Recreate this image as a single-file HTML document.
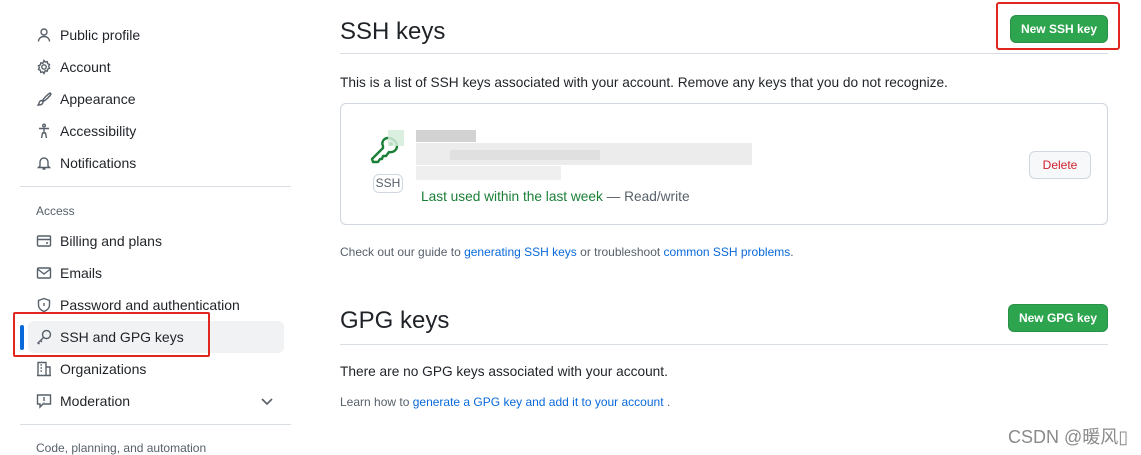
<!DOCTYPE html>
<html><head><meta charset="utf-8"><style>
*{margin:0;padding:0;box-sizing:border-box}
body{width:1141px;height:452px;overflow:hidden;background:#fff;font-family:"Liberation Sans","Noto Sans CJK SC",sans-serif;color:#1f2328;position:relative}
.a{position:absolute;white-space:nowrap}
.it{position:absolute;left:36px;font-size:14px;line-height:20px;display:flex;align-items:center}
.it svg{width:16px;height:16px;margin-right:8px;fill:none;stroke:#57606a;stroke-width:1.4}
.hr{position:absolute;height:1px;background:#d8dee4}
.btn{position:absolute;background:#2da44e;color:#fff;font-weight:bold;font-size:12px;border-radius:6px;border:1px solid rgba(27,31,36,.15);display:flex;align-items:center;justify-content:center}
a{color:#0969da;text-decoration:none}
.blur{position:absolute;background:#e8e8e8}
</style></head><body>
<div class="it" style="top:25px"><svg viewBox="0 0 16 16"><circle cx="8" cy="5" r="3"/><path d="M2.5 14.5c0-3 2.5-5 5.5-5s5.5 2 5.5 5"/></svg>Public profile</div>
<div class="it" style="top:57px"><svg viewBox="0 0 16 16"><circle cx="8" cy="8" r="2.2"/><path d="M8 1.5l1.2 1.6 2-.5.4 2 1.9.9-.8 1.9.8 1.9-1.9.9-.4 2-2-.5L8 14.5l-1.2-1.6-2 .5-.4-2-1.9-.9.8-1.9-.8-1.9 1.9-.9.4-2 2 .5z"/></svg>Account</div>
<div class="it" style="top:89px"><svg viewBox="0 0 16 16"><path d="M14 2c-2 1-6 5-7 7l1 1c2-1 6-5 7-7zM6 9.5c-2 0-3 1.5-3 3l-1 1.5c2 0 5-.5 5-3z"/></svg>Appearance</div>
<div class="it" style="top:121px"><svg viewBox="0 0 16 16"><circle cx="8" cy="2.5" r="1.3"/><path d="M3 5.5h10M8 5v5M5.5 15l1-5h3l1 5"/></svg>Accessibility</div>
<div class="it" style="top:153px"><svg viewBox="0 0 16 16"><path d="M4 11V7a4 4 0 018 0v4l1.5 1.5h-11zM6.5 14h3"/></svg>Notifications</div>
<div class="hr" style="left:20px;top:186px;width:271px"></div>
<div class="a" style="left:36px;top:204px;font-size:12px;color:#57606a">Access</div>
<div class="it" style="top:231px"><svg viewBox="0 0 16 16"><rect x="1.5" y="3" width="13" height="10" rx="1"/><path d="M1.5 6.5h13M10 10h2"/></svg>Billing and plans</div>
<div class="it" style="top:263px"><svg viewBox="0 0 16 16"><rect x="1.5" y="3" width="13" height="10" rx="1"/><path d="M1.5 4l6.5 5 6.5-5"/></svg>Emails</div>
<div class="it" style="top:295px"><svg viewBox="0 0 16 16"><path d="M8 1.5l5.5 2v4.5c0 3.5-3 5.5-5.5 6.5-2.5-1-5.5-3-5.5-6.5V3.5z"/><path d="M8 6v3"/></svg>Password and authentication</div>
<div class="a" style="left:28px;top:321px;width:256px;height:32px;background:#f0f2f4;border-radius:6px"></div>
<div class="a" style="left:20px;top:325px;width:4px;height:25px;background:#0969da;border-radius:3px"></div>
<div class="it" style="top:327px;font-weight:500"><svg viewBox="0 0 16 16"><circle cx="10.5" cy="5.5" r="4"/><path d="M7.5 8.5L2 14l1.5 1M4.5 11.5l1.5 1.5"/></svg>SSH and GPG keys</div>
<div class="it" style="top:359px"><svg viewBox="0 0 16 16"><path d="M2 14.5V1.5h8v13M10 6h4v8.5M1 14.5h14M4.5 4h1.5M4.5 7h1.5M4.5 10h1.5"/></svg>Organizations</div>
<div class="it" style="top:391px"><svg viewBox="0 0 16 16"><path d="M1.5 2h13v9H7l-3 3v-3H1.5z"/><path d="M8 4v4M8 9.5v.5"/></svg>Moderation</div>
<svg class="a" style="left:261px;top:397px" width="12" height="10" viewBox="0 0 12 10"><path d="M1 2l5 5 5-5" fill="none" stroke="#57606a" stroke-width="1.6"/></svg>
<div class="hr" style="left:20px;top:424px;width:271px"></div>
<div class="a" style="left:36px;top:441px;font-size:12px;color:#57606a">Code, planning, and automation</div>
<div class="a" style="left:13px;top:312px;width:197px;height:45px;border:2px solid #e0261f;border-radius:2px"></div>

<div class="a" style="left:340px;top:18px;font-size:24px;">SSH keys</div>
<div class="hr" style="left:340px;top:53px;width:768px"></div>
<div class="btn" style="left:1010px;top:15px;width:98px;height:28px">New SSH key</div>
<div class="a" style="left:996px;top:2px;width:124px;height:48px;border:2px solid #e0261f;border-radius:3px"></div>
<div class="a" style="left:340px;top:75px;font-size:13.7px">This is a list of SSH keys associated with your account. Remove any keys that you do not recognize.</div>
<div class="a" style="left:340px;top:103px;width:768px;height:122px;border:1px solid #d0d7de;border-radius:6px"></div>
<svg class="a" style="left:370px;top:136px" width="40" height="34" viewBox="0 0 40 34"><path d="M13 10c-2-4 1-8 5-8 5 0 9 4 9 8 0 4-4 7-8 6l-3 4-3 0-1 3-2 0-2 3H3l-1-3 11-11z" fill="none" stroke="#1a7f37" stroke-width="2.4" stroke-linejoin="round"/><circle cx="21" cy="8" r="1.8" fill="#1a7f37"/></svg>
<div class="a" style="left:388px;top:130px;width:16px;height:16px;background:#d4ecda;opacity:.85"></div>
<div class="a" style="left:373px;top:174px;width:30px;height:19px;border:1px solid #d0d7de;border-radius:6px;font-size:12px;color:#57606a;text-align:center;line-height:17px;background:#fff">SSH</div>
<div class="blur" style="left:416px;top:130px;width:60px;height:12px;background:#d2d2d2"></div>
<div class="blur" style="left:416px;top:143px;width:336px;height:22px;background:#ececec"></div>
<div class="blur" style="left:450px;top:150px;width:150px;height:10px;background:#e0e0e0"></div>
<div class="blur" style="left:416px;top:166px;width:145px;height:14px;background:#efefef"></div>
<div class="a" style="left:421px;top:189px;font-size:13.7px;color:#1a7f37">Last used within the last week <span style="color:#57606a">— Read/write</span></div>
<div class="a" style="left:1029px;top:151px;width:62px;height:28px;border:1px solid #d0d7de;border-radius:6px;background:#f6f8fa;color:#cf222e;font-size:12px;display:flex;align-items:center;justify-content:center">Delete</div>
<div class="a" style="left:340px;top:245px;font-size:12px;color:#57606a">Check out our guide to <a>generating SSH keys</a> or troubleshoot <a>common SSH problems</a>.</div>

<div class="a" style="left:340px;top:307px;font-size:24px">GPG keys</div>
<div class="hr" style="left:340px;top:344px;width:768px"></div>
<div class="btn" style="left:1008px;top:304px;width:100px;height:28px">New GPG key</div>
<div class="a" style="left:340px;top:364px;font-size:13.7px">There are no GPG keys associated with your account.</div>
<div class="a" style="left:340px;top:395px;font-size:12px;color:#57606a">Learn how to <a>generate a GPG key and add it to your account</a> .</div>
<div class="a" style="left:1008px;top:423px;font-size:18px;color:#8a8a8a">CSDN @暖风▯</div>
</body></html>
